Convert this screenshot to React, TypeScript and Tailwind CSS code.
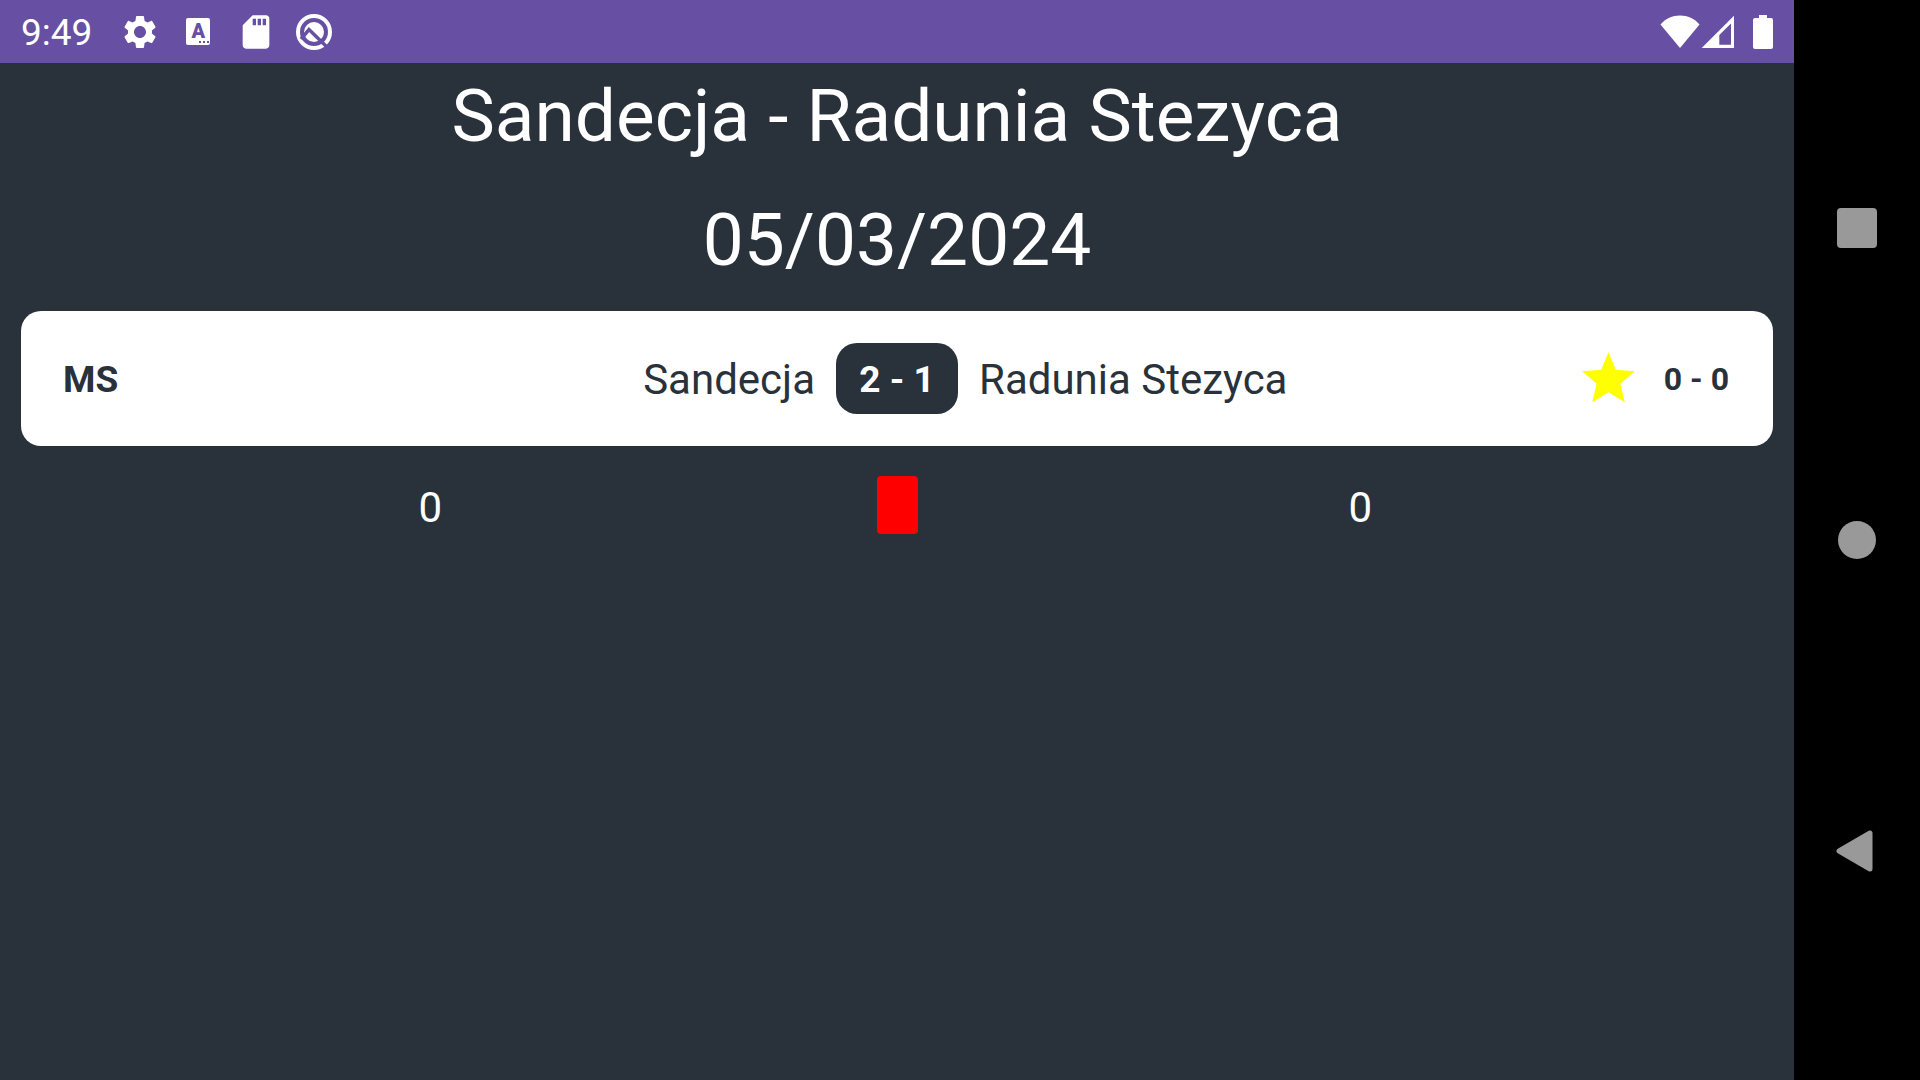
import type { ReactNode } from "react";

function SettingsIcon() {
  return (
    <svg viewBox="0 0 24 24" className="size-10" fill="currentColor" aria-hidden="true">
      <path d="M19.14 12.94c.04-.3.06-.61.06-.94 0-.32-.02-.64-.07-.94l2.03-1.58c.18-.14.23-.41.12-.61l-1.92-3.32c-.12-.22-.37-.29-.59-.22l-2.39.96c-.5-.38-1.03-.7-1.62-.94l-.36-2.54c-.04-.24-.24-.41-.48-.41h-3.84c-.24 0-.43.17-.47.41l-.36 2.54c-.59.24-1.13.57-1.62.94l-2.39-.96c-.22-.08-.47 0-.59.22L2.74 8.87c-.12.21-.08.47.12.61l2.03 1.58c-.05.3-.09.63-.09.94s.02.64.07.94l-2.03 1.58c-.18.14-.23.41-.12.61l1.92 3.32c.12.22.37.29.59.22l2.39-.96c.5.38 1.03.7 1.62.94l.36 2.54c.05.24.24.41.48.41h3.84c.24 0 .44-.17.47-.41l.36-2.54c.59-.24 1.13-.56 1.62-.94l2.39.96c.22.08.47 0 .59-.22l1.92-3.32c.12-.22.07-.47-.12-.61l-2.01-1.58zM12 15.6c-1.98 0-3.6-1.62-3.6-3.6s1.62-3.6 3.6-3.6 3.6 1.62 3.6 3.6-1.62 3.6-3.6 3.6z" />
    </svg>
  );
}

function KeyboardIcon() {
  return (
    <span className="flex size-10 items-center justify-center">
      <span className="flex h-[27px] w-6 flex-col items-center rounded-xs bg-white text-[#6750a4]">
        <span className="text-[20px] leading-[26px] font-black">A</span>
        <svg viewBox="0 0 24 2" className="-mt-[3px] h-[2px] w-6 shrink-0" fill="currentColor" aria-hidden="true">
          <path d="M13 0h2v2h-2zM17 0h2v2h-2zM21 0h2v2h-2z" />
        </svg>
      </span>
    </span>
  );
}

function SdCardIcon() {
  return (
    <svg viewBox="0 0 24 24" className="size-10" fill="currentColor" aria-hidden="true">
      <path d="M18 2h-8L4.02 8 4 20c0 1.100.9 2 2 2h12c1.100 0 2-.9 2-2V4c0-1.100-.9-2-2-2zm-6 6h-2V4h2v4zm3 0h-2V4h2v4zm3 0h-2V4h2v4z" />
    </svg>
  );
}

function SystemIcon() {
  return (
    <svg viewBox="0 0 40 40" className="size-10" aria-hidden="true">
      <circle cx="20" cy="20" r="16" fill="none" stroke="#fff" strokeWidth="4" />
      <circle cx="20" cy="20" r="10" fill="#fff" />
      <path d="M7 27l8-9.500 20 19.500" fill="none" stroke="#6750a4" strokeWidth="3.500" />
    </svg>
  );
}

function WifiIcon() {
  return (
    <svg viewBox="0 0 40 34" className="h-[34px] w-10" fill="currentColor" aria-hidden="true">
      <path d="M20 33L.5 9.500C5.500 3.500 12.500 .5 20 .5s14.500 3 19.500 9z" />
    </svg>
  );
}

function SignalIcon() {
  return (
    <svg viewBox="0 0 34 34" className="h-[34px] w-[34px]" fill="currentColor" fillRule="evenodd" aria-hidden="true">
      <path d="M33 .7V33H.7zM30 8.500L18.300 20v9.700H30z" />
    </svg>
  );
}

function BatteryIcon() {
  return (
    <svg viewBox="0 0 20 34" className="h-[34px] w-5" fill="currentColor" aria-hidden="true">
      <path d="M6 0h8v3h4a2 2 0 0 1 2 2v27a2 2 0 0 1-2 2H2a2 2 0 0 1-2-2V5a2 2 0 0 1 2-2h4z" />
    </svg>
  );
}

function StatusBar() {
  return (
    <header className="flex h-[63px] items-center justify-between bg-[#6750a4] px-[21px] text-white">
      <div className="flex items-center">
        <time className="mr-7 pt-[2px] text-[37px] leading-[43px]">9:49</time>
        <div className="flex gap-[18px]">
          <SettingsIcon />
          <KeyboardIcon />
          <SdCardIcon />
          <SystemIcon />
        </div>
      </div>
      <div className="flex items-center">
        <WifiIcon />
        <span className="mr-[18px] ml-px">
          <SignalIcon />
        </span>
        <BatteryIcon />
      </div>
    </header>
  );
}

function NavButton({ label, children }: { label: string; children: ReactNode }) {
  return (
    <button type="button" aria-label={label} className="flex w-full flex-1 items-center justify-center">
      <svg viewBox="0 0 42 42" className="size-[42px]" fill="#999" aria-hidden="true">
        {children}
      </svg>
    </button>
  );
}

function NavigationBar() {
  return (
    <nav className="flex w-[126px] shrink-0 flex-col bg-black pt-[72px] pb-[73px]">
      <NavButton label="Recent apps">
        <rect x="1" y="1" width="40" height="40" rx="4" />
      </NavButton>
      <NavButton label="Home">
        <circle cx="21" cy="21" r="19" />
      </NavButton>
      <NavButton label="Back">
        <path d="M3 21L34 3v36z" stroke="#999" strokeWidth="5" strokeLinejoin="round" />
      </NavButton>
    </nav>
  );
}

function MatchCard() {
  return (
    <section className="mx-[21px] grid grid-cols-[1fr_auto_1fr] items-center gap-[21px] rounded-[20px] bg-white px-[42px] py-8 text-[42px] leading-[63px] text-[#29323b]">
      <div className="flex items-center justify-between pt-[2px]">
        <span className="text-[37px] font-bold">MS</span>
        <span>Sandecja</span>
      </div>
      <strong className="min-w-[122px] rounded-[21px] bg-[#29323b] px-5 pt-[5px] pb-[3px] text-center text-[37px] font-bold text-white">
        2 - 1
      </strong>
      <div className="flex items-center justify-between">
        <span className="pt-[2px]">Radunia Stezyca</span>
        <span className="flex items-center gap-6 pr-[2px]">
          <svg viewBox="0 0 24 24" className="size-[63px]" fill="#ffff00" role="img" aria-label="Favourite">
            <path d="M12 17.270L18.180 21l-1.640-7.030L22 9.240l-7.190-.61L12 2 9.190 8.630 2 9.240l5.460 4.730L5.820 21z" />
          </svg>
          <span className="pt-[2px] text-[32px] font-bold">0 - 0</span>
        </span>
      </div>
    </section>
  );
}

function RedCards() {
  return (
    <section className="mt-[30px] grid grid-cols-[1fr_auto_1fr] text-center text-[42px] leading-[63px] text-white">
      <span>0</span>
      <span className="mx-4 h-[58px] w-[41px] rounded-[4px] bg-[#ff0000]" role="img" aria-label="Red cards" />
      <span className="pr-[7px]">0</span>
    </section>
  );
}

export default function App() {
  return (
    <div className="flex min-h-screen bg-[#29323b] font-[Roboto,sans-serif]">
      <div className="flex min-w-0 flex-1 flex-col">
        <StatusBar />
        <main>
          <div className="flex flex-col pt-[9px] pb-[27px] text-center text-[73px] leading-[88px] text-white">
            <h1 className="mb-9">Sandecja - Radunia Stezyca</h1>
            <time dateTime="2024-03-05">05/03/2024</time>
          </div>
          <MatchCard />
          <RedCards />
        </main>
      </div>
      <NavigationBar />
    </div>
  );
}
